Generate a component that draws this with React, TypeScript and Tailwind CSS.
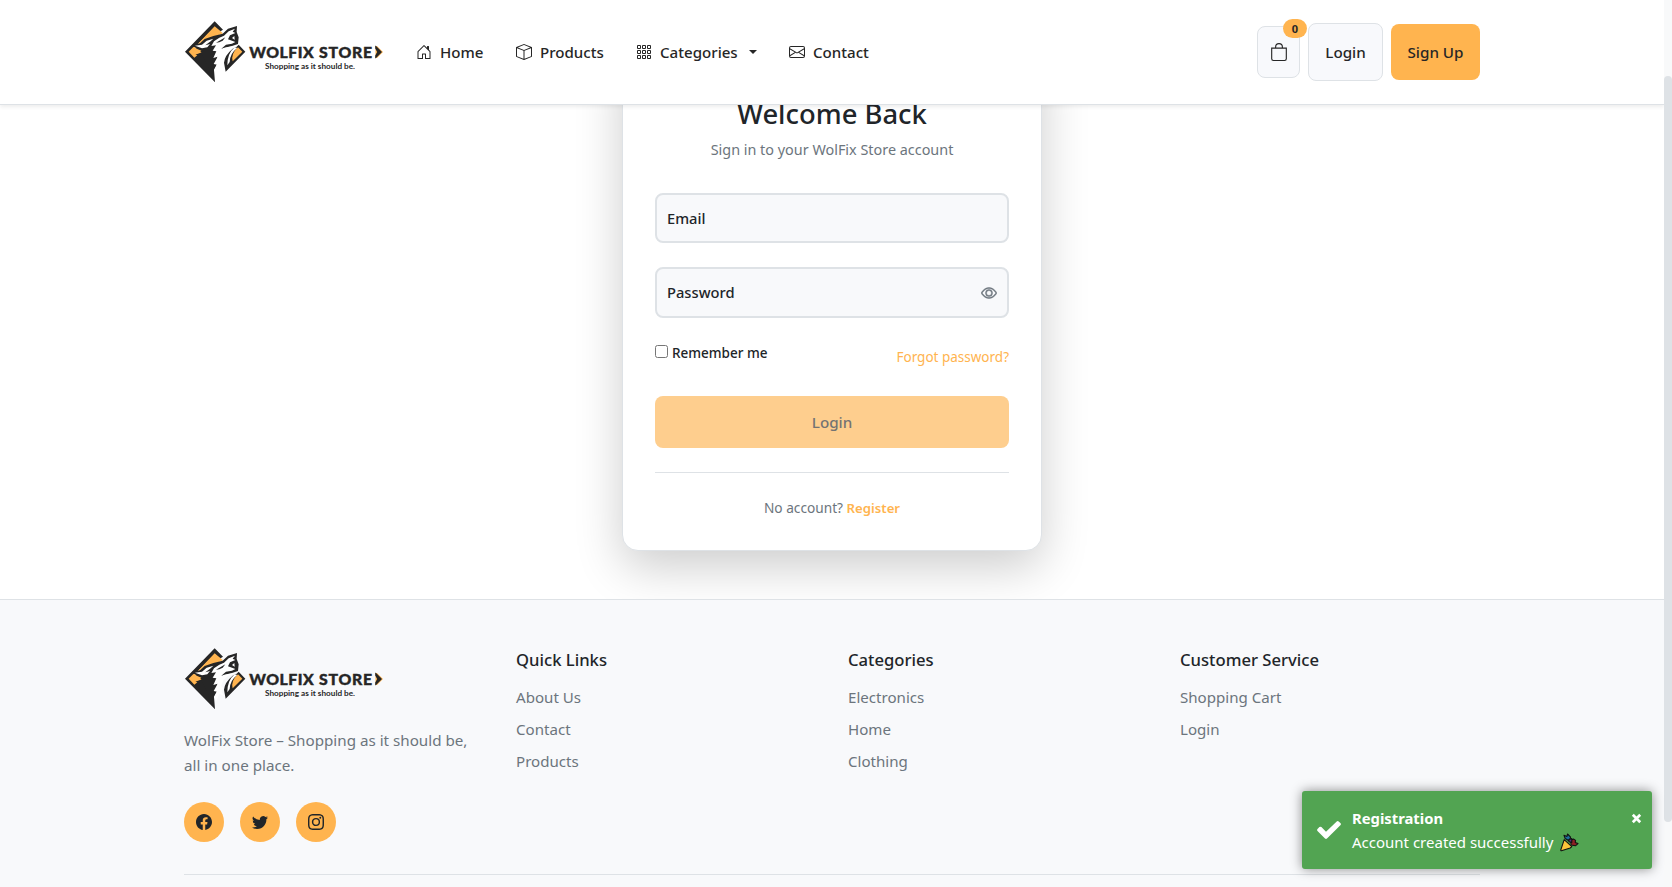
import {
  BsHouseDoor,
  BsBox,
  BsGrid3X3Gap,
  BsEnvelope,
  BsBag,
  BsEye,
  BsFacebook,
  BsTwitter,
  BsInstagram,
} from 'react-icons/bs';

function Logo() {
  return (
    <svg width="200" height="68" viewBox="0 0 200 68" className="block" role="img" aria-label="WolFix Store">
      <g transform="translate(-2 0) scale(0.33333)">
        {/* left frame and neck */}
        <path
          fill="#262626"
          d="M98 10 L123 35 L112 42 L98 28 L50 76 L24 101 L36 114 L48 97 L100 84 L96 118 L108 110 L97 134 L106 136 L96 156 L99 193 L9 101 Z"
        />
        <path fill="#ffb44f" d="M98 25 L123 46 L98 56 L80 64 L64 68 L38 88 Z" />
        <path fill="#ffb44f" d="M34 87 L66 92 L54 102 L60 103 L40 110 L46 112 L37 119 L20 101 Z" />
        {/* head */}
        <path
          fill="#262626"
          d="M31 80 L54 76 L68 63 L94 54 L122 47 L138 32 L165 24 L164 42 L170 58 L168 78 L150 84 L124 90 L108 112 L98 150 L80 150 L60 110 L58 98 L44 92 Z"
        />
        <path fill="#ffffff" d="M39 83 L60 80 L74 68 L94 62 L86 70 L70 82 L84 78 L76 88 L60 91 Z" />
        <path
          fill="#ffffff"
          d="M96 70 L112 59 L126 53 L140 40 L159 32 L152 41 L160 45 L144 52 L138 64 L160 72 L150 77 L132 80 L118 92 L140 87 L162 84 L136 94 L124 106 L117 124 L125 129 L118 140 L127 153 L112 146 L103 168 L96 156 L105 140 L95 138 L107 116 L94 120 L103 100 L92 98 L102 82 L88 84 Z"
        />
        <path fill="#262626" d="M102 74 L130 58 L122 68 L112 73 Z" />
        <path fill="#ffffff" d="M150 60 L157 54 L158 65 Z" />
        {/* right frame */}
        <path fill="#262626" d="M170 80 L190 101 L131 161 L126 134 Q128 112 152 92 L164 86 Z" />
        <path fill="#ffffff" d="M158 88 Q136 106 136 142 L143 132 Q144 106 166 90 Z" />
        <path fill="#ffb44f" d="M168 88 L181 101 L152 130 Q146 108 168 88 Z" />
      </g>
      <g fill="#262626" stroke="#262626" strokeWidth="0.4" className="font-['Lato',sans-serif] text-[15.8px] font-black">
        <text x="65.3" y="39.6" textLength="64.5" lengthAdjust="spacing">
          WOLFIX
        </text>
        <text x="135" y="39.6" textLength="53" lengthAdjust="spacing">
          STORE
        </text>
      </g>
      <text
        x="81"
        y="50.6"
        textLength="90"
        lengthAdjust="spacingAndGlyphs"
        fill="#262626"
        className="font-['Lato',sans-serif] text-[8px] font-bold"
      >
        Shopping as it should be.
      </text>
      <path fill="#ffb44f" d="M193 28 L199 34 L193 40 L191.5 40 L191.5 28 Z" />
      <path fill="#262626" d="M191.2 27.5 L192.6 28.5 L198 34 L192.6 39.5 L191.2 40.5 L191.2 37.5 L193.2 34 L191.2 30.5 Z" />
    </svg>
  );
}

function Header() {
  return (
    <header className="relative z-10 h-[105px] shrink-0 border-b border-[#dee2e6] bg-white shadow-[0_2px_4px_rgba(0,0,0,0.075)]">
      <div className="mx-auto flex h-[104px] w-[1296px] items-center justify-between">
        <div className="flex items-center">
          <Logo />
          <nav className="ml-8 flex items-center gap-8 text-[15.1px] leading-6 font-medium whitespace-nowrap text-[#262626]">
            <a className="flex items-center gap-2">
              <BsHouseDoor size={16} />
              <span className="w-11">Home</span>
            </a>
            <a className="flex items-center gap-2">
              <BsBox size={16} />
              <span className="w-16">Products</span>
            </a>
            <a className="flex items-center gap-2">
              <BsGrid3X3Gap size={16} />
              <span className="w-[78px]">Categories</span>
              <span className="ml-[3px] w-2 border-x-4 border-t-4 border-x-transparent border-t-[#262626]" />
            </a>
            <a className="flex items-center gap-2">
              <BsEnvelope size={16} />
              <span className="w-14">Contact</span>
            </a>
          </nav>
        </div>
        <div className="flex items-center gap-2 text-[15.2px] font-medium text-[#262626]">
          <button className="relative flex h-[52px] w-[43px] items-center justify-center rounded-lg border border-[#dee2e6] bg-[#f8f9fc]">
            <BsBag size={18} />
            <span className="absolute -top-2 -right-[8px] flex h-[19px] w-6 items-center justify-center rounded-full bg-[#ffb44f] pt-px text-[11px] font-bold">
              0
            </span>
          </button>
          <button className="h-[58px] w-[75px] rounded-lg border border-[#dee2e6] bg-[#f8f9fc] pt-px">Login</button>
          <button className="h-14 w-[89px] rounded-lg bg-[#ffb44f]">Sign Up</button>
        </div>
      </div>
    </header>
  );
}

function LoginCard() {
  return (
    <section className="mx-auto -mt-[60px] w-[420px] rounded-2xl border border-[#dee2e6] bg-white px-8 pt-[51px] pb-8 shadow-[0_16px_48px_rgba(0,0,0,0.2)]">
      <h1 className="text-center text-[27.4px] leading-[34px] font-medium text-[#212529]">Welcome Back</h1>
      <p className="mt-2 text-center text-[14.4px] leading-[22px] text-[#6c757d]">Sign in to your WolFix Store account</p>
      <div className="mt-8 flex h-[50px] items-center rounded-lg border-2 border-[#dee2e6] bg-[#f8f9fb] px-2.5 pt-px text-[14.7px] font-medium text-[#212529]">
        Email
      </div>
      <div className="mt-6 flex h-[51px] items-center justify-between rounded-lg border-2 border-[#dee2e6] bg-[#f8f9fb] px-2.5 text-[14.7px] font-medium text-[#212529]">
        Password
        <BsEye size={16} strokeWidth={0.5} className="text-[#6c757d]" />
      </div>
      <div className="mt-[25px] flex h-6 items-start justify-between text-[13.5px] leading-5">
        <label className="flex items-start gap-1 font-medium text-[#212529]">
          <input type="checkbox" className="mt-0.5 h-[13px] w-[13px]" />
          Remember me
        </label>
        <a className="mt-1 text-[#ffb44f]">Forgot password?</a>
      </div>
      <button className="mt-[29px] block h-[52px] w-full rounded-lg bg-[#fece8e] text-[15.2px] font-medium text-[#737373]">Login</button>
      <p className="mt-6 border-t border-[#dee2e6] pt-[25px] text-center text-[13.7px] leading-5 text-[#6c757d]">
        No account? <a className="text-[13.2px] font-semibold text-[#ffb44f]">Register</a>
      </p>
    </section>
  );
}

function LinkColumn({ title, links }: { title: string; links: string[] }) {
  return (
    <div className="pt-1">
      <h5 className="text-[16.65px] leading-[22px] font-medium text-[#212529]">{title}</h5>
      <ul className="mt-3.5 flex flex-col gap-2 text-[15.1px] leading-6 text-[#6c757d]">
        {links.map((link) => (
          <li key={link}>{link}</li>
        ))}
      </ul>
    </div>
  );
}

function Footer() {
  return (
    <footer className="mt-12 grow border-t border-[#dee2e6] bg-[#f8f9fb]">
      <div className="mx-auto w-[1296px] pt-[45px]">
        <div className="grid h-[229px] grid-cols-[332px_332px_332px_300px]">
          <div>
            <Logo />
            <p className="mt-[15px] w-[300px] text-[15.2px] leading-[25px] text-[#6c757d]">
              WolFix Store – Shopping as it should be, all in one place.
            </p>
            <div className="mt-6 flex gap-4">
              {[BsFacebook, BsTwitter, BsInstagram].map((Icon, i) => (
                <a key={i} className="flex h-10 w-10 items-center justify-center rounded-full bg-[#ffb44f] text-[#212529]">
                  <Icon size={16} />
                </a>
              ))}
            </div>
          </div>
          <LinkColumn title="Quick Links" links={['About Us', 'Contact', 'Products']} />
          <LinkColumn title="Categories" links={['Electronics', 'Home', 'Clothing']} />
          <LinkColumn title="Customer Service" links={['Shopping Cart', 'Login']} />
        </div>
        <div className="border-t border-[#dee2e6]" />
      </div>
    </footer>
  );
}

function PartyPopper() {
  return (
    <svg width="19" height="19" viewBox="0 0 19 19" role="img" aria-label="Party popper" stroke="#111111" strokeWidth="1.1" strokeLinejoin="round">
      <path fill="#1d6f9c" d="M4 2.2 L7 3.4 L7.5 1 L10.6 4.2 L9.4 8 L5.2 5.6 Z" />
      <path fill="#8e1f24" d="M10.5 7.6 L13.4 6 L15.6 7.4 L15.2 9.4 L18 10.6 L15.4 12.8 L11.2 12 Z" />
      <path fill="#5b2a86" d="M8.8 6.5 L11.8 5.6 L11.8 9.4 L9 8.8 Z" />
      <path fill="#fcc53a" d="M4.2 6.6 L11.8 13.6 L10.2 15 L1.4 17.8 Q0.6 17.8 0.8 16.8 Z" />
    </svg>
  );
}

function Toast() {
  return (
    <div className="absolute top-[791px] right-5 z-20 flex h-[78px] w-[350px] rounded-[3px] bg-[#52a452] pt-4 text-white shadow-[0_0_12px_rgba(0,0,0,0.45)]">
      <svg width="24" height="18" viewBox="0 0 24 18" className="mt-3.5 ml-[15px]">
        <path
          fill="white"
          d="M23.6 3.9 L10 17.5 Q9 18.4 8 17.5 L0.5 10.1 Q-0.3 9 0.5 8.1 L2.4 6.1 Q3.4 5.3 4.4 6.1 L9 10.8 L19.7 0.4 Q20.7 -0.3 21.7 0.5 L23.6 2.3 Q24.3 3.1 23.6 3.9 Z"
        />
      </svg>
      <div className="ml-[11px] text-[15px] leading-6">
        <div className="text-[14.8px] leading-[23px] font-bold">Registration</div>
        <div className="flex items-center gap-[7px] whitespace-nowrap">
          Account created successfully <PartyPopper />
        </div>
      </div>
      <svg width="11" height="11" viewBox="0 0 11 11" className="absolute top-[22px] right-[10.5px]">
        <path d="M1.8 1.8 L9.2 9.2 M9.2 1.8 L1.8 9.2" stroke="white" strokeWidth="2.7" />
      </svg>
    </div>
  );
}

export default function App() {
  return (
    <div className="relative flex h-[887px] w-[1672px] overflow-hidden bg-white font-['Noto_Sans',sans-serif]">
      <div className="flex h-full w-[1664px] flex-col overflow-hidden">
        <Header />
        <main>
          <LoginCard />
        </main>
        <Footer />
      </div>
      <div className="h-full w-2 bg-[#f8f9fa] pt-[76px]">
        <div className="h-[746px] rounded-full bg-[#dee2e6]" />
      </div>
      <Toast />
    </div>
  );
}
